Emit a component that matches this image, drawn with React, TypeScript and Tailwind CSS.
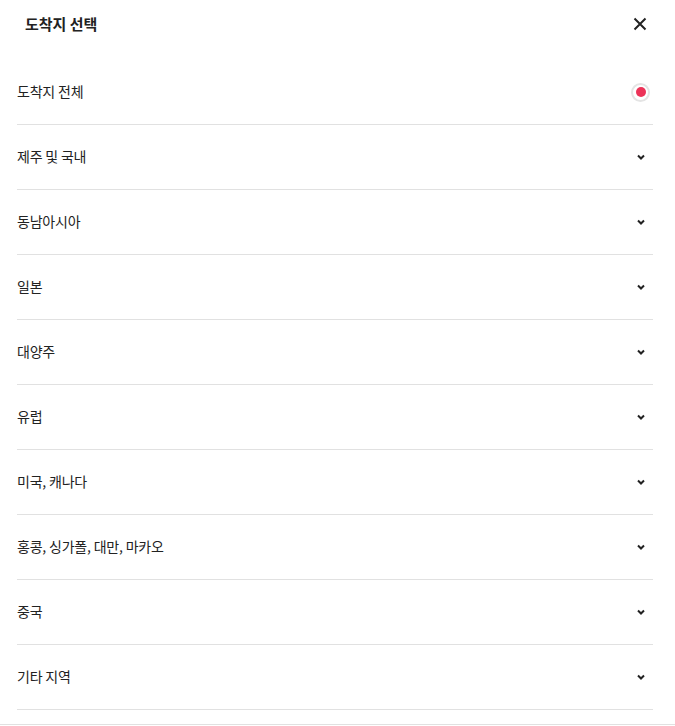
import React, { useState } from "react";

const regions = [
  "제주 및 국내",
  "동남아시아",
  "일본",
  "대양주",
  "유럽",
  "미국, 캐나다",
  "홍콩, 싱가폴, 대만, 마카오",
  "중국",
  "기타 지역",
];

const font = { fontFamily: '"Noto Sans CJK KR", "Noto Sans", sans-serif' };

const Chevron = () => (
  <svg width="10" height="10" viewBox="0 0 10 10" className="text-[#222]">
    <path d="M2 3.5 L5 6.5 L8 3.5" fill="none" stroke="currentColor" strokeWidth="2" />
  </svg>
);

const App = () => {
  const [selected] = useState("all");

  return (
    <div className="w-[675px] h-[726px] bg-white text-[#222] overflow-hidden" style={font}>
      {/* Header */}
      <div className="h-[48px] flex items-center justify-between pl-[25px] pr-[27px]">
        <h2 className="text-[15px] font-bold leading-[20px] mb-[1px]">도착지 선택</h2>
        <button className="w-[16px] h-[16px] flex items-center justify-center">
          <svg width="14" height="14" viewBox="0 0 14 14">
            <path d="M1.5 1.5 L12.5 12.5 M12.5 1.5 L1.5 12.5" stroke="#222" strokeWidth="2" />
          </svg>
        </button>
      </div>

      {/* List */}
      <div className="mt-[12px] ml-[17px] w-[636px]">
        <div className="h-[65px] flex items-center justify-between border-b border-[#e1e1e1]">
          <span className="text-[14px] tracking-[-0.2px] leading-[20px] mb-[3px]">도착지 전체</span>
          <span className="mr-[3px] w-[19px] h-[19px] rounded-full border-2 border-[#e4e4e4] flex items-center justify-center">
            {selected === "all" && <span className="w-[10px] h-[10px] rounded-full bg-[#ec3358]" />}
          </span>
        </div>
        {regions.map((r) => (
          <div key={r} className="h-[65px] flex items-center justify-between border-b border-[#e1e1e1]">
            <span className="text-[14px] tracking-[-0.2px] leading-[20px] mb-[3px]">{r}</span>
            <span className="mr-[7px] flex items-center">
              <Chevron />
            </span>
          </div>
        ))}
      </div>

      <div className="mt-[14px] border-t border-[#e1e1e1]" />
    </div>
  );
};

export default App;
